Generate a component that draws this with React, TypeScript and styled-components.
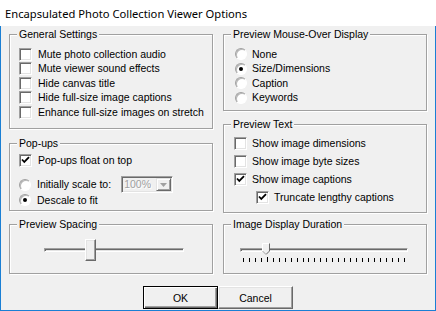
import React from "react";
import styled, { createGlobalStyle } from "styled-components";

const GlobalStyle = createGlobalStyle`
  html, body {
    margin: 0;
    padding: 0;
    background: #f0f0f0;
  }
  body {
    font-family: "Liberation Sans", Arial, sans-serif;
    font-size: 10.5px;
    color: #000;
  }
`;

export const Window = styled.div`
  width: 436px;
  height: 311px;
  display: flex;
  flex-direction: column;
  background: #f0f0f0;
  overflow: hidden;
`;

export const TitleBar = styled.div`
  height: 26px;
  flex-shrink: 0;
  background: #ffffff;
  display: flex;
  align-items: center;
  padding-left: 5px;
  font-family: "Noto Sans", "Open Sans", sans-serif;
  font-size: 11.2px;
  color: #000;
`;

export const Body = styled.div`
  flex: 1;
  border: 1px solid #1a7fd4;
  border-top: none;
  padding: 8px 8px 0 8px;
  display: flex;
  flex-direction: column;
`;

export const TopGrid = styled.div`
  display: grid;
  grid-template-columns: 204px 204px;
  column-gap: 10px;
  height: 179px;
`;

export const Column = styled.div<{ $gap: number }>`
  display: flex;
  flex-direction: column;
  gap: ${(p) => p.$gap}px;
`;

export const SliderRow = styled.div`
  display: grid;
  grid-template-columns: 204px 204px;
  column-gap: 10px;
  margin-top: 11px;
`;

export const Group = styled.div<{ $h: number; $pt: number; $pl: number }>`
  position: relative;
  box-sizing: border-box;
  height: ${(p) => p.$h}px;
  border: 1px solid #a0a0a0;
  box-shadow: inset 1px 1px 0 #ffffff, 1px 1px 0 #ffffff;
  padding: ${(p) => p.$pt}px 0 0 ${(p) => p.$pl}px;
  display: flex;
  flex-direction: column;
`;

export const Caption = styled.span`
  position: absolute;
  top: -7px;
  left: 7px;
  padding: 0 2px;
  line-height: 13px;
  background: #f0f0f0;
  white-space: nowrap;
`;

export const Row = styled.label<{ $h: number; $indent?: number; $gap?: number }>`
  display: flex;
  align-items: center;
  height: ${(p) => p.$h}px;
  padding-left: ${(p) => p.$indent ?? 0}px;
  gap: ${(p) => p.$gap ?? 6}px;
  white-space: nowrap;
  line-height: 13px;
`;

export const CheckBox = styled.span`
  box-sizing: border-box;
  width: 13px;
  height: 13px;
  flex-shrink: 0;
  background: #ffffff;
  border: 1px solid;
  border-color: #a0a0a0 #ffffff #ffffff #a0a0a0;
  box-shadow: inset 1px 1px 0 #696969, inset -1px -1px 0 #e3e3e3;
  display: flex;
  align-items: center;
  justify-content: center;
`;

export const Radio = styled.span`
  box-sizing: border-box;
  width: 12px;
  height: 12px;
  flex-shrink: 0;
  border-radius: 50%;
  background: #ffffff;
  border: 1px solid;
  border-color: #a0a0a0 #ffffff #ffffff #a0a0a0;
  box-shadow: inset 1px 1px 0 #b8b8b8;
  display: flex;
  align-items: center;
  justify-content: center;
`;

export const RadioDot = styled.span`
  width: 4px;
  height: 4px;
  border-radius: 50%;
  background: #000;
`;

export const Combo = styled.div`
  box-sizing: border-box;
  width: 52px;
  height: 17px;
  margin-left: 4px;
  display: flex;
  align-items: stretch;
  background: #f0f0f0;
  border: 1px solid;
  border-color: #a0a0a0 #ffffff #ffffff #a0a0a0;
  box-shadow: inset 1px 1px 0 #696969, inset -1px -1px 0 #e3e3e3;
`;

export const ComboText = styled.span`
  flex: 1;
  padding: 1px 0 0 2px;
  color: #a0a0a0;
  text-shadow: 1px 1px 0 #ffffff;
  line-height: 13px;
`;

export const ComboButton = styled.span`
  box-sizing: border-box;
  width: 15px;
  margin: 1px 1px 1px 0;
  background: #f0f0f0;
  border: 1px solid;
  border-color: #e3e3e3 #696969 #696969 #e3e3e3;
  box-shadow: inset 1px 1px 0 #ffffff, inset -1px -1px 0 #a0a0a0;
  display: flex;
  align-items: center;
  justify-content: center;
`;

export const SliderArea = styled.div<{ $left: number; $top: number; $w: number; $h: number }>`
  position: relative;
  margin: ${(p) => p.$top}px 0 0 ${(p) => p.$left}px;
  width: ${(p) => p.$w}px;
  height: ${(p) => p.$h}px;
`;

export const TrackLine = styled.div<{ $top: number }>`
  position: absolute;
  left: 0;
  right: 0;
  top: ${(p) => p.$top}px;
  height: 4px;
  box-sizing: border-box;
  background: #e3e3e3;
  border: 1px solid;
  border-color: #a0a0a0 #ffffff #ffffff #a0a0a0;
  box-shadow: inset 1px 1px 0 #696969;
`;

export const BlockThumb = styled.div`
  position: absolute;
  top: 0;
  width: 11px;
  height: 22px;
  box-sizing: border-box;
  background: #f0f0f0;
  border: 1px solid;
  border-color: #ffffff #696969 #696969 #ffffff;
  box-shadow: inset -1px -1px 0 #a0a0a0, inset 1px 1px 0 #e3e3e3;
`;

export const PointerThumb = styled.svg`
  position: absolute;
  top: 0;
`;

export const Ticks = styled.div`
  position: absolute;
  left: 3px;
  right: 3px;
  top: 15px;
  display: flex;
  justify-content: space-between;
`;

export const Tick = styled.span<{ $long?: boolean }>`
  width: 1px;
  height: ${(p) => (p.$long ? 5 : 4)}px;
  margin-top: ${(p) => (p.$long ? -1 : 0)}px;
  background: #000;
`;

export const ButtonRow = styled.div`
  display: flex;
  justify-content: center;
  margin-top: 12px;
`;

export const Button = styled.button<{ $default?: boolean }>`
  box-sizing: border-box;
  width: 75px;
  height: 23px;
  padding: 0;
  font-family: "Liberation Sans", Arial, sans-serif;
  font-size: 10.5px;
  color: #000;
  background: #f0f0f0;
  border: 1px solid;
  border-color: ${(p) => (p.$default ? "#000 #000 #000 #000" : "#ffffff #696969 #696969 #ffffff")};
  box-shadow: ${(p) =>
    p.$default
      ? "inset 1px 1px 0 #ffffff, inset -1px -1px 0 #696969, inset -2px -2px 0 #a0a0a0"
      : "inset -1px -1px 0 #a0a0a0, inset 1px 1px 0 #e3e3e3"};
`;

const Check = ({ on }: { on?: boolean }) => (
  <CheckBox>
    {on && (
      <svg width="9" height="9" viewBox="0 0 9 9">
        <path d="M1 3.5 L3.3 6 L8 1.2" stroke="#000" strokeWidth="1.8" fill="none" />
      </svg>
    )}
  </CheckBox>
);

const RadioBtn = ({ on }: { on?: boolean }) => <Radio>{on && <RadioDot />}</Radio>;

const generalItems = [
  "Mute photo collection audio",
  "Mute viewer sound effects",
  "Hide canvas title",
  "Hide full-size image captions",
  "Enhance full-size images on stretch",
];

const mouseOver = [
  { t: "None", on: false },
  { t: "Size/Dimensions", on: true },
  { t: "Caption", on: false },
  { t: "Keywords", on: false },
];

const previewText = [
  { t: "Show image dimensions", on: false, indent: 0 },
  { t: "Show image byte sizes", on: false, indent: 0 },
  { t: "Show image captions", on: true, indent: 0 },
  { t: "Truncate lengthy captions", on: true, indent: 22 },
];

const TICKS = 28;

export default function App() {
  const spacingValue = 0.29;
  const durationValue = 0.13;
  return (
    <Window>
      <GlobalStyle />
      <TitleBar>Encapsulated Photo Collection Viewer Options</TitleBar>
      <Body>
        <TopGrid>
          <Column $gap={14}>
            <Group $h={95} $pt={12} $pl={9}>
              <Caption>General Settings</Caption>
              {generalItems.map((t) => (
                <Row key={t} $h={14.5}>
                  <Check />
                  {t}
                </Row>
              ))}
            </Group>
            <Group $h={68} $pt={9} $pl={9}>
              <Caption>Pop-ups</Caption>
              <Row $h={14}>
                <Check on />
                Pop-ups float on top
              </Row>
              <Row $h={17} $gap={6} style={{ marginTop: 9 }}>
                <RadioBtn />
                Initially scale to:
                <Combo>
                  <ComboText>100%</ComboText>
                  <ComboButton>
                    <svg width="7" height="4" viewBox="0 0 7 4">
                      <path d="M0 0 H7 L3.5 4 Z" fill="#a0a0a0" />
                    </svg>
                  </ComboButton>
                </Combo>
              </Row>
              <Row $h={14} $gap={6}>
                <RadioBtn on />
                Descale to fit
              </Row>
            </Group>
          </Column>
          <Column $gap={13}>
            <Group $h={77} $pt={12} $pl={11}>
              <Caption>Preview Mouse-Over Display</Caption>
              {mouseOver.map((r) => (
                <Row key={r.t} $h={14.5} $gap={5}>
                  <RadioBtn on={r.on} />
                  {r.t}
                </Row>
              ))}
            </Group>
            <Group $h={89} $pt={9} $pl={10}>
              <Caption>Preview Text</Caption>
              {previewText.map((r) => (
                <Row key={r.t} $h={18} $indent={r.indent} $gap={5}>
                  <Check on={r.on} />
                  {r.t}
                </Row>
              ))}
            </Group>
          </Column>
        </TopGrid>
        <SliderRow>
          <Group $h={50} $pt={0} $pl={0}>
            <Caption>Preview Spacing</Caption>
            <SliderArea $left={34} $top={14} $w={140} $h={22}>
              <TrackLine $top={9} />
              <BlockThumb style={{ left: Math.round(spacingValue * 140) }} />
            </SliderArea>
          </Group>
          <Group $h={50} $pt={0} $pl={0}>
            <Caption>Image Display Duration</Caption>
            <SliderArea $left={16} $top={18} $w={168} $h={20}>
              <TrackLine $top={5} />
              <PointerThumb
                width="8"
                height="12"
                viewBox="0 0 8 12"
                style={{ left: Math.round(durationValue * 168) }}
              >
                <path d="M0.5 0.5 H7.5 V8 L4 11.5 L0.5 8 Z" fill="#f0f0f0" />
                <path d="M0.5 8 V0.5 H7" stroke="#ffffff" fill="none" />
                <path d="M7.5 0.5 V8 L4 11.5" stroke="#696969" fill="none" />
                <path d="M0.5 8 L3.5 11" stroke="#a0a0a0" fill="none" />
              </PointerThumb>
              <Ticks>
                {Array.from({ length: TICKS }).map((_, i) => (
                  <Tick key={i} $long={i === 4} />
                ))}
              </Ticks>
            </SliderArea>
          </Group>
        </SliderRow>
        <ButtonRow>
          <Button $default>OK</Button>
          <Button>Cancel</Button>
        </ButtonRow>
      </Body>
    </Window>
  );
}
